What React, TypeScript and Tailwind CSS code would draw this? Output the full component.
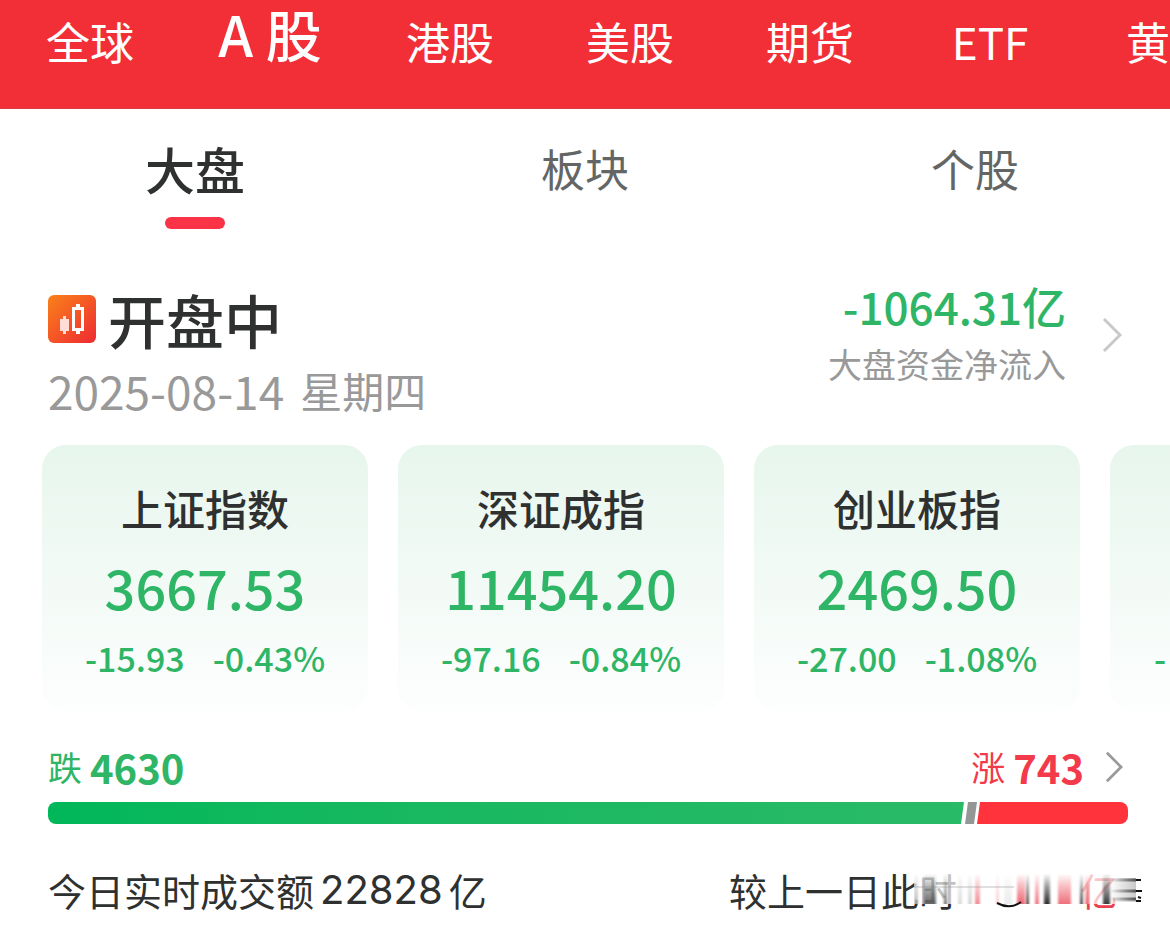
import { useState } from "react";
import clsx from "clsx";

const MARKETS = ["全球", "A 股", "港股", "美股", "期货", "ETF", "黄金"];
const VIEWS = ["大盘", "板块", "个股"];

interface Quote { name: string; price: string; change: string; pct: string }

const QUOTES: Quote[] = [
  { name: "上证指数", price: "3667.53", change: "-15.93", pct: "-0.43%" },
  { name: "深证成指", price: "11454.20", change: "-97.16", pct: "-0.84%" },
  { name: "创业板指", price: "2469.50", change: "-27.00", pct: "-1.08%" },
];

// x, width, colour, opacity of each streak over the hidden comparison figure
const STREAKS: [number, number, string, number][] = [
  [0, 4, "#777777", 0.5], [10, 12, "#333333", 0.75], [30, 3, "#333333", 0.7], [44, 4, "#999999", 0.35],
  [54, 4, "#999999", 0.4], [61, 5, "#e8404f", 0.6], [82, 3, "#e8404f", 0.25], [90, 8, "#999999", 0.2],
  [103, 8, "#e8404f", 0.8], [112, 3, "#222222", 0.8], [121, 4, "#e8404f", 0.7], [130, 6, "#222222", 0.95],
  [144, 13, "#e8404f", 0.75], [166, 3, "#222222", 0.8], [171, 4, "#e8404f", 0.7], [189, 7, "#222222", 0.9],
];

function Chevron({ className }: { className: string }) {
  return (
    <svg viewBox="0 0 20 36" fill="none" stroke="currentColor" strokeWidth="3" className={className} aria-hidden="true">
      <path d="M2 2 18 18 2 34" />
    </svg>
  );
}

function CandleIcon() {
  return (
    <svg viewBox="0 0 48 48" className="size-12 shrink-0" aria-hidden="true">
      <defs>
        <linearGradient id="candle" x1="0" y1="0" x2="1" y2="1">
          <stop offset="0" stopColor="#fa8219" />
          <stop offset="1" stopColor="#ee2a33" />
        </linearGradient>
      </defs>
      <rect width="48" height="48" rx="6" fill="url(#candle)" />
      <path d="M15 21h3v3h3v12h-3v3h-3v-3h-3V24h3z" fill="#ffdcd6" />
      <path d="M28 9h4v3h4v24h-4v3h-4v-3h-4V12h4zM27 15v18h6V15z" fill="#fff" fillRule="evenodd" />
    </svg>
  );
}

function QuoteCard({ q }: { q: Quote }) {
  return (
    <article className="flex w-[326px] shrink-0 flex-col items-center rounded-3xl bg-linear-to-b from-[#e7f6ed] to-[#fdfefe] pt-[33px] pb-7 font-medium text-[#2eb566]">
      <h2 className="text-[42px] leading-[60px] text-[#2e3130]">{q.name}</h2>
      <p className="mt-3 text-[54px] leading-[74px]">{q.price}</p>
      <p className="mt-2 flex gap-7 text-[34px] leading-[52px]">
        <span>{q.change}</span>
        <span>{q.pct}</span>
      </p>
    </article>
  );
}

function Masked() {
  return (
    <svg viewBox="0 0 228 40" className="absolute top-[14px] right-0 h-10 w-[228px]" aria-hidden="true">
      <defs>
        <linearGradient id="fade" x1="0" y1="0" x2="0" y2="1">
          <stop offset="0" stopColor="#fff" stopOpacity="0.02" />
          <stop offset="0.4" stopColor="#fff" stopOpacity="0.45" />
          <stop offset="1" stopColor="#fff" />
        </linearGradient>
        <linearGradient id="tail" x1="0" y1="0" x2="1" y2="0">
          <stop offset="0" stopColor="#222" stopOpacity="0" />
          <stop offset="1" stopColor="#222" stopOpacity="0.7" />
        </linearGradient>
        <mask id="streaks"><rect width="228" height="30" fill="url(#fade)" /></mask>
        <filter id="soft" x="-5%" width="110%"><feGaussianBlur stdDeviation="1 0.3" /></filter>
      </defs>
      <rect y="-2" width="228" height="32" fill="#fff" opacity="0.7" />
      <g mask="url(#streaks)" filter="url(#soft)">
        {STREAKS.map(([x, w, fill, opacity]) => (
          <rect key={x} x={x} width={w} height="31" fill={fill} opacity={opacity} />
        ))}
      </g>
      <path d="M0 13H100" stroke="#888" strokeWidth="2" opacity="0.25" />
      <path d="M83 29q13 7 24-1" fill="none" stroke="#111" strokeWidth="2" />
      <path d="M196 6h26M196 17h26M196 25h26" stroke="url(#tail)" strokeWidth="3" />
      <rect x="196" y="4" width="26" height="24" fill="url(#tail)" opacity="0.35" />
      <path d="M222 6h5M222 17h6M222 27h5M224 23l3 1" stroke="#111" strokeWidth="2" />
    </svg>
  );
}

export default function App() {
  const [market, setMarket] = useState("A 股");
  const [view, setView] = useState("大盘");

  return (
    <div className="overflow-hidden bg-white font-['Noto_Sans_CJK_SC',sans-serif] text-[#2e3130]">
      <header className="border-b border-[#d83a42] bg-[#f22f37] pb-5 text-white">
        <nav className="flex h-[88px] items-start">
          {MARKETS.map((m) => (
            <button
              key={m}
              onClick={() => setMarket(m)}
              className={clsx(
                "w-[180px] shrink-0 whitespace-nowrap",
                m === market ? "text-[56px] leading-[66px] font-medium" : "text-[44px] leading-[82px]",
              )}
            >
              {m}
            </button>
          ))}
        </nav>
      </header>

      <nav className="grid grid-cols-3 pt-6">
        {VIEWS.map((v) => (
          <button key={v} onClick={() => setView(v)} className="flex flex-col items-center">
            <span className={clsx("leading-[70px]", v === view ? "text-[50px] font-medium" : "text-[44px] text-[#636665]")}>{v}</span>
            <span className={clsx("mt-3.5 h-3 w-[60px] rounded-full", v === view && "bg-[#fb3347]")} />
          </button>
        ))}
      </nav>

      <main className="pt-[52px]">
        <section className="flex items-start justify-between px-12">
          <div>
            <h1 className="flex items-center gap-3 text-[58px] leading-[76px] font-medium">
              <CandleIcon />
              开盘中
            </h1>
            <p className="flex items-center gap-4 leading-[66px] text-[#999999]">
              <time dateTime="2025-08-14" className="text-[46px]">2025-08-14</time>
              <span className="text-[42px]">星期四</span>
            </p>
          </div>
          <a href="#flow" className="flex items-center gap-9">
            <span className="flex flex-col items-end leading-[50px]">
              <span className="text-[44px] font-medium text-[#2eb566]">-1064.31亿</span>
              <span className="mt-2 text-[34px] text-[#999999]">大盘资金净流入</span>
            </span>
            <Chevron className="h-9 w-5 text-[#c8c8c8]" />
          </a>
        </section>

        <section className="mt-[22px] flex gap-[30px] pl-[42px]">
          {QUOTES.map((q) => <QuoteCard key={q.name} q={q} />)}
          <article className="w-[326px] shrink-0 rounded-3xl bg-linear-to-b from-[#e7f6ed] to-[#fdfefe] pt-[187px] pl-11 text-[34px] leading-[52px] font-medium text-[#2eb566]">-</article>
        </section>

        <section className="pt-6 pr-[42px] pl-12">
          <div className="flex items-center justify-between pr-1 leading-[62px]">
            <p className="flex items-center gap-2 text-[#2eb566]">
              <span className="text-[34px]">跌</span>
              <span className="text-[40px] font-bold">4630</span>
            </p>
            <a href="#breadth" className="flex items-center gap-2 text-[#f23a4b]">
              <span className="text-[34px]">涨</span>
              <span className="text-[40px] font-bold">743</span>
              <Chevron className="ml-3 h-8 w-5 text-[#999999]" />
            </a>
          </div>
          <div className="mt-1 flex h-[22px] overflow-hidden rounded-lg">
            <div className="flex-1 bg-linear-to-r from-[#00b75a] to-[#2aba68]" />
            <svg viewBox="0 0 24 22" className="-ml-6 h-[22px] w-6 shrink-0" aria-hidden="true">
              <path d="M6 0h18v22H3z" fill="#fff" />
              <path d="M10 0h9l-3 22H7z" fill="#939796" />
              <path d="M22 0h2v22h-5z" fill="#ff333c" />
            </svg>
            <div className="w-[13.5%] bg-[#ff333c]" />
          </div>
        </section>

        <footer className="flex items-center justify-between pt-9 pr-7 pb-2 pl-12 text-[38px] leading-[60px]">
          <p className="flex items-center gap-1.5">
            今日实时成交额
            <span className="font-[Inter] text-[40px]">22828</span>
            亿
          </p>
          <p className="relative flex w-[413px] justify-between">
            较上一日此时
            <span className="pr-6 text-[#e8404f]">亿</span>
            <Masked />
          </p>
        </footer>
      </main>
    </div>
  );
}
